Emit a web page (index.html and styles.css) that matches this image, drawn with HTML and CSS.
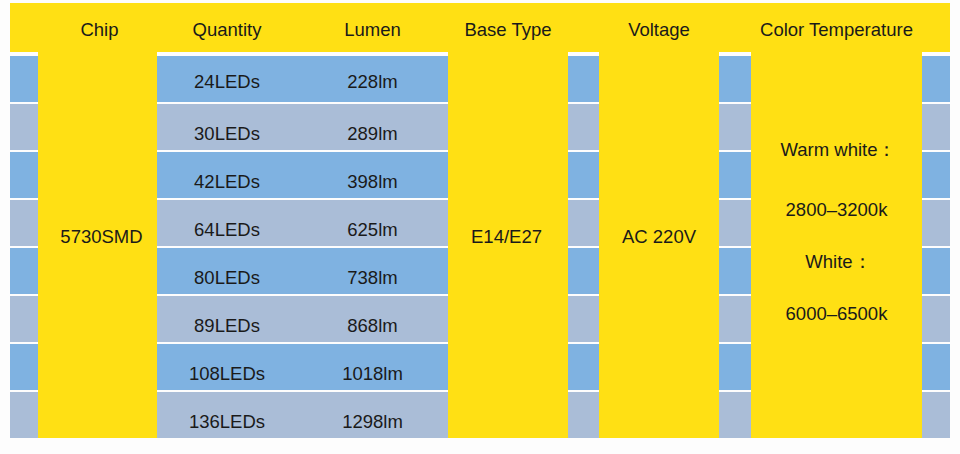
FILE: index.html
```html
<!DOCTYPE html>
<html>
<head>
<meta charset="utf-8">
<link rel="stylesheet" href="styles.css">
</head>
<body>
<div class="sheet">
  <div class="head">
    <div class="h strip1"></div>
    <div class="h chip">Chip</div>
    <div class="h qty">Quantity</div>
    <div class="h lum">Lumen</div>
    <div class="h base">Base Type</div>
    <div class="h strip2"></div>
    <div class="h volt">Voltage</div>
    <div class="h strip3"></div>
    <div class="h color">Color Temperature</div>
    <div class="h strip4"></div>
  </div>
  <div class="body">
    <div class="stack strip1">
      <div class="r b"></div><div class="r g"></div><div class="r b"></div><div class="r g"></div>
      <div class="r b"></div><div class="r g"></div><div class="r b"></div><div class="r g"></div>
    </div>
    <div class="yel chip"><span>5730SMD</span></div>
    <div class="stack ql">
      <div class="r b"><span class="qc">24LEDs</span><span class="lc">228lm</span></div>
      <div class="r g"><span class="qc">30LEDs</span><span class="lc">289lm</span></div>
      <div class="r b"><span class="qc">42LEDs</span><span class="lc">398lm</span></div>
      <div class="r g"><span class="qc">64LEDs</span><span class="lc">625lm</span></div>
      <div class="r b"><span class="qc">80LEDs</span><span class="lc">738lm</span></div>
      <div class="r g"><span class="qc">89LEDs</span><span class="lc">868lm</span></div>
      <div class="r b"><span class="qc">108LEDs</span><span class="lc">1018lm</span></div>
      <div class="r g"><span class="qc">136LEDs</span><span class="lc">1298lm</span></div>
    </div>
    <div class="yel base"><span>E14/E27</span></div>
    <div class="stack strip2">
      <div class="r b"></div><div class="r g"></div><div class="r b"></div><div class="r g"></div>
      <div class="r b"></div><div class="r g"></div><div class="r b"></div><div class="r g"></div>
    </div>
    <div class="yel volt"><span>AC 220V</span></div>
    <div class="stack strip3">
      <div class="r b"></div><div class="r g"></div><div class="r b"></div><div class="r g"></div>
      <div class="r b"></div><div class="r g"></div><div class="r b"></div><div class="r g"></div>
    </div>
    <div class="yel color temps">
      <p class="t1">Warm white：</p>
      <p class="t2">2800–3200k</p>
      <p class="t3">White：</p>
      <p class="t4">6000–6500k</p>
    </div>
    <div class="stack strip4">
      <div class="r b"></div><div class="r g"></div><div class="r b"></div><div class="r g"></div>
      <div class="r b"></div><div class="r g"></div><div class="r b"></div><div class="r g"></div>
    </div>
  </div>
</div>
</body>
</html>
```
FILE: styles.css
```css
* { box-sizing: border-box; }
html, body { margin: 0; padding: 0; background: #fdfdfd; }
body {
  width: 960px;
  height: 454px;
  overflow: hidden;
  font-family: "Liberation Sans", Arial, sans-serif;
  color: #1a1a1a;
  font-size: 18.5px;
}
.sheet {
  padding: 3px 0 0 10px;
  width: 960px;
}
.head {
  display: flex;
  height: 49px;
  width: 940px;
  background: #ffe014;
}
.h {
  display: flex;
  align-items: center;
  justify-content: center;
  padding-top: 4px;
  white-space: nowrap;
}
.h.chip { padding-left: 4px; }
.strip1 { width: 28px; }
.chip { width: 119px; }
.qty { width: 140px; }
.lum { width: 151px; }
.ql { width: 291px; }
.base { width: 120px; }
.strip2 { width: 31px; }
.volt { width: 120px; }
.strip3 { width: 32px; }
.color { width: 171px; }
.strip4 { width: 28px; }

.body {
  display: flex;
  width: 940px;
  height: 386px;
}
.stack {
  display: flex;
  flex-direction: column;
  gap: 2px;
  padding-top: 4px;
  background: #fdfdfd;
}
.r {
  height: 46px;
  display: flex;
  align-items: center;
  padding-top: 14px;
}
.r:first-child { padding-top: 6px; }
.r.b { background: #7fb2e1; }
.r.g { background: #aabdd7; }
.qc {
  width: 140px;
  text-align: center;
}
.lc {
  width: 151px;
  text-align: center;
}
.yel {
  background: #ffe014;
  display: flex;
  align-items: center;
  justify-content: center;
  padding-bottom: 16px;
  white-space: nowrap;
}
.yel.chip { padding-left: 8px; }
.yel.base { padding-right: 3px; }
.temps {
  flex-direction: column;
  justify-content: flex-start;
  padding: 87px 0 0 0;
}
.temps p {
  margin: 0;
  line-height: 22px;
  text-align: center;
}
.t1 { padding-left: 4px; }
.t2 { margin-top: 38px !important; }
.t3 { margin-top: 30px !important; padding-left: 4px; }
.t4 { margin-top: 30px !important; }
```
